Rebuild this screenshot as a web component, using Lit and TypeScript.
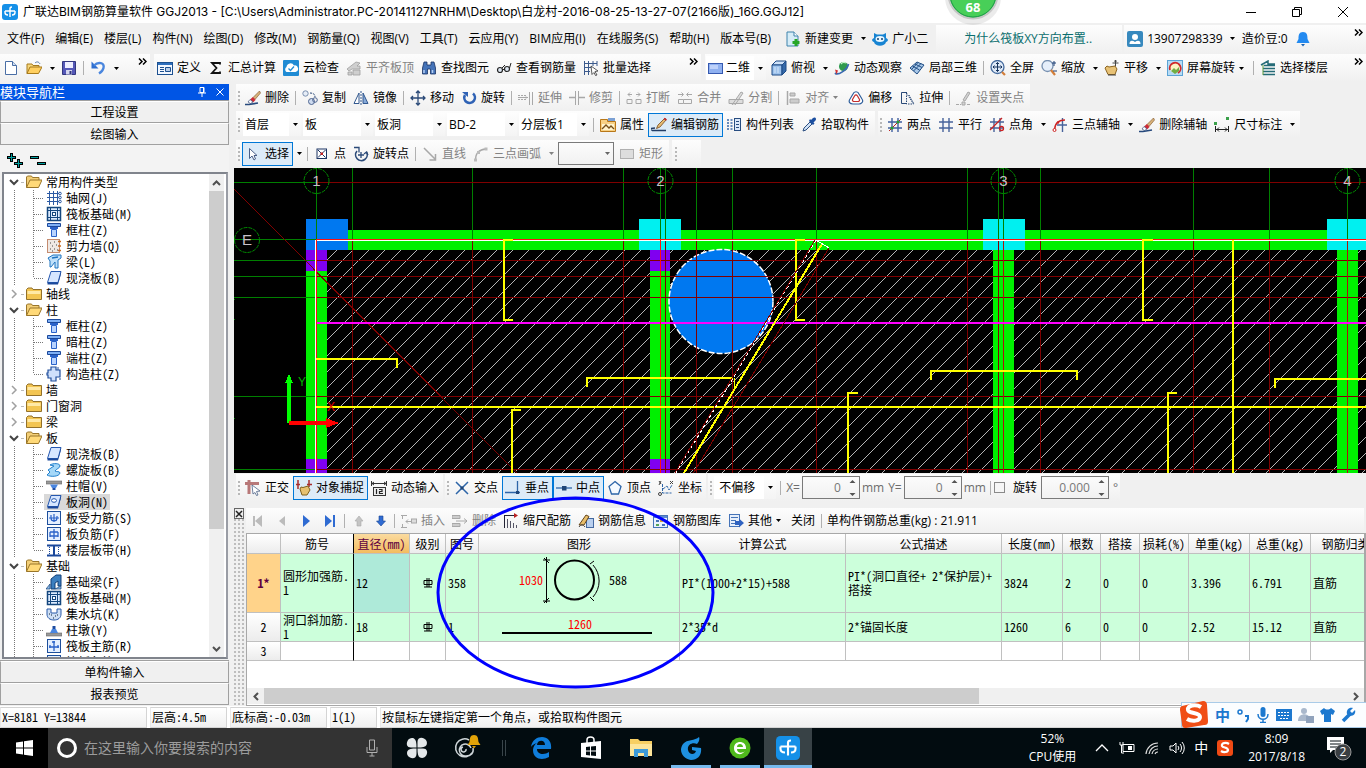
import { LitElement, html, svg, css, nothing, TemplateResult } from "lit";
import { customElement } from "lit/decorators.js";
import { classMap } from "lit/directives/class-map.js";

const GREY = "#a8a8a8";

const grid = (c: string) => svg`<path d="M5 1v14M11 1v14M1 5h14M1 11h14" stroke=${c} stroke-width="1.4" fill="none"/>`;
const frame = svg`<rect x="1.5" y="1.5" width="13" height="13" fill="#e4efff" stroke="#1d4f9c"/>`;
const column = svg`<path d="M1.500 1.500h13v3h-13z" fill="#7fb0f5" stroke="#1b489b"/><path d="M4 5h8v2H4z" fill="#2a62c9"/><path d="M5.500 7.500h5v7h-5z" fill="#b9d4ff" stroke="#2a62c9"/>`;
const slab = svg`<path d="M5 1.500h10l-3 11H1.500z" fill="#d6e6ff" stroke="#2558b0"/><path d="M1.500 12.500H12v2H1.500z" fill="#1b489b"/><path d="M12 12.500l3-11v2.500l-3 10.500z" fill="#1b489b"/>`;
const raft = svg`<rect x="1.500" y="1.500" width="13" height="13" fill="#dcebff" stroke="#14477e" stroke-width="1.500"/><path d="M4.500 2v12M11.500 2v12M2 4.500h12M2 11.500h12" stroke="#14477e"/><rect x="6.500" y="6.500" width="3" height="3" fill="#fff" stroke="#14477e"/>`;
const brush = svg`<path d="M14.500 1L8 7.500l2 2L15.500 3z" fill="#d8b27a" stroke="#7a4f22" stroke-width=".6"/><path d="M8 7L5 9.500 8 12.500l2.500-2.500z" fill="#cf2b37"/><path d="M5 9.500L3 12l2.500 1.500L8 12z" fill="#fff" stroke="#3c4c78" stroke-width=".7"/><path d="M0 14.500h4M4 14.500l9-1.500" stroke="#274a7d" stroke-width="1.600"/>`;

const ICONS: Record<string, TemplateResult> = {
  logo: svg`<rect width="16" height="16" rx="3" fill="#1590e8"/><path d="M8 13V4.500q0-1.500 2-1.500M3 7h10M3 7v1.500q0 2.500 3 2.500M13 7v1.500q0 2.500-3 2.500" stroke="#fff" stroke-width="1.400" fill="none"/>`,
  file: svg`<path d="M2.500 1.500h7l4 4v9h-11z" fill="#fff" stroke="#4a6ea5"/><path d="M9.500 1.500v4h4" fill="#cfdef2" stroke="#4a6ea5"/>`,
  open: svg`<path d="M1 13.500V4h5l1 1.500h6V7" fill="#f6d77c" stroke="#a77a1c"/><path d="M1 13.500L4 7h12l-3.500 6.500z" fill="#ffcf60" stroke="#a77a1c"/><path d="M9 3c2-2 4-1 5 1" stroke="#5577a8" fill="none"/>`,
  save: svg`<path d="M1.500 1.500h13v13h-13z" fill="#5558b8" stroke="#34387f"/><rect x="4" y="2" width="8" height="6" fill="#eef"/><rect x="5" y="10" width="6" height="4.500" fill="#d5d7ef"/><rect x="8.500" y="11" width="2" height="3" fill="#34387f"/>`,
  undo: svg`<path d="M1.500 1.500v7h7z" fill="#2f6fd0"/><path d="M4 5.500c4-4 11-3 9.500 2.500-.5 2-2 4-4.500 5.500" stroke="#4a86de" stroke-width="2.400" fill="none"/>`,
  define: svg`<rect x=".5" y="2.500" width="15" height="12" fill="#f2f7ff" stroke="#1c5090"/><rect x="1" y="3" width="14" height="2" fill="#2e6fbd"/><path d="M3 7.500h4M3 9.500h4M3 11.500h4" stroke="#1c5090"/><path d="M8.500 7.500h5v4h-5z" fill="#b9cde8" stroke="#1c5090"/>`,
  sigma: svg`<path d="M12 4.500V3H4l4.500 5L4 13h8v-1.500" fill="none" stroke="#111" stroke-width="1.800"/>`,
  cloud: svg`<rect width="16" height="16" rx="1" fill="#1f8bd4"/><path d="M3.500 12a3 3 0 0 1 0-5 4 4 0 0 1 7.500-1.500A3.300 3.300 0 0 1 12.500 12z" fill="#fff"/><path d="M5.500 8.500l2 2 3.500-4" stroke="#1f8bd4" stroke-width="1.300" fill="none"/>`,
  flat: svg`<path d="M1 9l9-7 4 1-3 3h3v3H6l-3 2zM2 12h4v3H2zM7 10h7v5H7z" fill="#cfcfcf" stroke="#a0a0a0" stroke-width=".8"/>`,
  find: svg`<path d="M3 2h3v3h4V2h3l1.500 6v6h-5V9h-3v5h-5V8z" fill="#4573b8" stroke="#1b3465" stroke-width=".8"/><path d="M3 10v3M11.500 10v3" stroke="#b6d0f3" stroke-width="1.500"/>`,
  view: svg`<circle cx="4" cy="10" r="2.500" fill="#dfe8f4" stroke="#222" stroke-width="1.200"/><circle cx="11" cy="9" r="2.500" fill="#dfe8f4" stroke="#222" stroke-width="1.200"/><path d="M6.500 10L8.500 9M13.500 8l1.500-5M6 8l3-3" stroke="#222"/>`,
  batch: svg`<path d="M1.500 1v14M1 3.500h13M1 7.500h8M1 11.500h6M5.500 1v14M10 1v5M14 1v5" stroke="#3c5a8c" fill="none"/><path d="M8 6l7 5-3 .5 2 3.500-1.500.5-1.500-3-2 2z" fill="#fff" stroke="#333" stroke-width=".8"/>`,
  rect2d: svg`<rect x=".5" y="3.500" width="14" height="10" fill="#8fb0f0" stroke="#3559b0"/><rect x="2" y="5" width="8" height="4" fill="#bdd1fa"/>`,
  cube: svg`<path d="M1 5l4-4h10l-4 4z" fill="#cfe2f8" stroke="#1d4a86"/><path d="M1 5h10v10H1z" fill="#9dc2ec" stroke="#1d4a86"/><path d="M11 5l4-4v10l-4 4z" fill="#3569a9" stroke="#1d4a86"/><path d="M4 7v6M7 7v6" stroke="#d4e6fa"/>`,
  orbit: svg`<circle cx="9.500" cy="6.500" r="4.500" fill="#2f9a4d"/><path d="M7 4a4 4 0 0 1 5-1" stroke="#c5f2c9" fill="none" stroke-width="1.300"/><path d="M1 13c3 3 12-3 13.500-9" stroke="#3a6ab0" stroke-width="1.800" fill="none"/><path d="M1 9.500l3 1-1.500 4z" fill="#d12f2f"/>`,
  local3d: svg`<path d="M1 8l7-6 7 3-7 9z" fill="#a9c8e9" stroke="#1f4d84"/><path d="M3.500 6l7 4M6 4l7 3.500M4.500 11L12 3.500M2.500 9.500L9 2.500" stroke="#1f4d84"/>`,
  full: svg`<circle cx="7.500" cy="7" r="6.500" fill="#dfeaf8" stroke="#466b9e" stroke-width="1.300"/><path d="M7.500 2.500v9M3 7h9M6 4l1.500-1.500L9 4M6 10l1.500 1.500L9 10M4.500 5.500L3 7l1.500 1.500M10.500 5.500L12 7l-1.500 1.500" stroke="#18355e" fill="none"/><path d="M12 12l3 3" stroke="#d27e3a" stroke-width="2.200"/>`,
  zoom: svg`<circle cx="6.500" cy="6" r="5.500" fill="#e6effa" stroke="#7790b0" stroke-width="1.300"/><path d="M10 10l4 5" stroke="#d27e3a" stroke-width="2.200"/><path d="M13 1v5M11 3h4M12 11h4" stroke="#1d3f74"/>`,
  pan: svg`<path d="M1 8l2-2 2 1 6-1 2 3-2 5.500H4z" fill="#e8c276" stroke="#8b6420"/><path d="M11.500 0v6M8.500 3h6M10.500 1.500l1-1.500 1 1.500M4 15h8" stroke="#444" fill="none"/>`,
  rotscreen: svg`<rect x=".5" y=".5" width="15" height="15" fill="#b7dcf5" stroke="#5ba3d5"/><circle cx="8" cy="8" r="5" fill="#fcf4c4"/><path d="M3 10a5.500 5.500 0 1 1 8 3" stroke="#cf2a2a" stroke-width="1.800" fill="none"/><path d="M4 11l3-3 2 2 3-3v4l-4 3z" fill="#70ae45"/>`,
  floors: svg`<path d="M1 5l7-4v3h7M4 5.500h11M3 8.500h12M3 11.500h12M3 14.500h12" stroke="#256b77" stroke-width="1.500" fill="none"/><path d="M3 5v10" stroke="#5f9c3e"/>`,
  newdoc: svg`<path d="M2 1h7l4 4v10H2z" fill="#d6ecf7" stroke="#3e83ac"/><path d="M9 1v4h4" fill="#fff" stroke="#3e83ac"/><path d="M11 8v7M7.500 11.500h7" stroke="#26a626" stroke-width="3"/>`,
  robot: svg`<path d="M2 2l3 1.500h6L14 2v5c3 1 2 4 0 4-1 5-11 5-12 0-2 0-3-3 0-4z" fill="#1784d2"/><ellipse cx="8" cy="8" rx="4.500" ry="3" fill="#e7f6ff"/><circle cx="6" cy="8" r="1" fill="#14416e"/><circle cx="10" cy="8" r="1" fill="#14416e"/>`,
  user: svg`<rect width="16" height="16" rx="2" fill="#3789be"/><circle cx="8" cy="6" r="3" fill="#fff"/><path d="M2.500 13c0-4 3-4 5.500-2 2.500-2 5.500-2 5.500 2z" fill="#fff"/>`,
  bell: svg`<path d="M8 1c4 0 4.500 3 4.500 7l2 4h-13l2-4C3.500 4 4 1 8 1z" fill="#238af0"/><path d="M6 13h4l-2 2.500z" fill="#1a63b4"/>`,
  brush,
  copy: svg`<circle cx="3.500" cy="3.500" r="2.700" fill="#e6edf7" stroke="#7a8fae"/><circle cx="9.500" cy="11.500" r="3" fill="#cfdcf0" stroke="#4e6590"/><circle cx="13" cy="10" r="2.300" fill="none" stroke="#4e6590"/><path d="M8 3c3 0 5 1 5 4" stroke="#2b4a78" fill="none" stroke-dasharray="2 1"/>`,
  mirror: svg`<path d="M1 13.500L6 3v10.500z" fill="#fff" stroke="#33598f"/><path d="M8 1v14" stroke="#33598f" stroke-dasharray="2 1"/><path d="M10 3l5 10.500h-5z" fill="#86a9d8" stroke="#33598f"/>`,
  move: svg`<path d="M8 1v14M1 8h14M6 3l2-2 2 2M6 13l2 2 2-2M3 6L1 8l2 2M13 6l2 2-2 2" stroke="#2b4a78" stroke-width="1.300" fill="none"/>`,
  rotate: svg`<path d="M12 3.500A5.300 5.300 0 1 1 4 5" stroke="#2f62b5" stroke-width="2.600" fill="none"/><path d="M1 2h6v5z" fill="#2f62b5"/>`,
  extend: svg`<path d="M0 5.500h8v4H0" stroke=${GREY} stroke-dasharray="2 1" fill="none"/><path d="M0 7.500h10M11.500 2v13M14.500 2v13" stroke=${GREY}/>`,
  trim: svg`<path d="M0 7.500h6M10 7.500h6" stroke=${GREY} stroke-width="1.500"/><path d="M6.500 1v14M9.500 1v14" stroke=${GREY}/>`,
  brk: svg`<path d="M1 9.500h5v4H1zM10 9.500h5v4h-5zM6 4.500H2M10 4.500h4M4 2.500l-2 2 2 2M12 2.500l2 2-2 2" stroke=${GREY} fill="none"/>`,
  join: svg`<path d="M1.500 9.500h5v4h-5zM6.500 9.500h8v4h-8M1 4.500h5M15 4.500h-5M4.500 2.500l2 2-2 2M11.500 2.500l-2 2 2 2" stroke=${GREY} fill="none"/>`,
  split: svg`<path d="M1 9.500h14v4H1zM4 15l9-13 2 1-8 12" stroke=${GREY} fill="#ddd"/>`,
  align: svg`<path d="M2.500 1v14" stroke=${GREY} stroke-width="1.500"/><path d="M5 3h5v3H5zM5 9h9v4H5z" fill="#ccc" stroke=${GREY}/>`,
  offset: svg`<path d="M5 4c1-3 5-3 6 0l3 5c2 3-1 5-3 5H5c-3 0-5-2-3-5z" fill="#fff" stroke="#2f5f9c" stroke-width="1.200"/><path d="M6.500 6c1-1.500 2-1.500 3 0l2 3.500c.5 1-.5 2-1.500 2H6c-1 0-2-1-1.500-2z" fill="#fff" stroke="#c22f2f" stroke-width="1.200"/>`,
  stretch: svg`<path d="M8 2.500H2.500v11H8" stroke="#2b4a78" fill="none"/><path d="M7.500 3v11h7zM10 5l5 9" stroke="#2b4a78" stroke-dasharray="1.500 1" fill="none"/>`,
  grip: svg`<path d="M0 14.500h5M11 14.500h4" stroke=${GREY} stroke-dasharray="3 1"/><path d="M7 10l5-8 2 1-5 8zM6 12h3v3H6z" fill="#d2d2d2" stroke=${GREY}/>`,
  prop: svg`<path d="M.5 2.500h7v2h8v10H.5z" fill="#f7d084" stroke="#b87718"/><path d="M2 7h12v6H2z" fill="#fff3cd"/><path d="M2 12l4-4 3 3 2-2 3 3" stroke="#754d16" fill="none" stroke-width="1.300"/><rect x="8" y="1" width="7" height="3" fill="#7ba0d4"/>`,
  editbar: svg`<path d="M14 1L7 8l-1.500 3.500L9 10l6-7z" fill="#e6bb72" stroke="#754b21" stroke-width=".8"/><path d="M13 1.500L15.500 3" stroke="#c4282e" stroke-width="1.500"/><path d="M0 14V11.500L4 11M1 13.500h14" stroke="#223d66" stroke-width="1.300" fill="none"/>`,
  list: svg`<path d="M1 3h2M1 6h2M1 9h2M1 12h2M4.500 3h2M4.500 6h2M4.500 9h2M4.500 12h2" stroke="#3a68a8" stroke-width="1.500"/><rect x="8.500" y="1.500" width="6" height="12" fill="#dbe8f9" stroke="#284d80"/><path d="M10 4.500h3M10 7.500h3M10 10.500h3" stroke="#284d80"/>`,
  picker: svg`<path d="M2 14l1-3 6-6 2 2-6 6z" fill="#cfe1f6" stroke="#2c4e80"/><path d="M8 4l4 4 1.500-1.500-1-1 2-2c1.500-2-.5-4-2.500-2.500l-2 2-1-1z" fill="#1c4fa0"/>`,
  ax2: svg`${grid("#4060a0")}<path d="M2 14L14 2" stroke="#b22" /><circle cx="5" cy="11" r="1.500" fill="#2b9b2b"/><circle cx="11" cy="5" r="1.500" fill="#2b9b2b"/>`,
  axpar: grid("#47639b"),
  axang: svg`${grid("#47639b")}<path d="M1 13L13 1" stroke="#c22" stroke-width="1.300"/><circle cx="12.500" cy="11.500" r="2" fill="none" stroke="#c22" stroke-width="1.300"/>`,
  ax3: svg`<path d="M10.500 1v14M5 8h10" stroke="#47639b" stroke-width="1.400"/><path d="M2.500 14C2.500 7 6 3 13 3" stroke="#c22" fill="none" stroke-width="1.300"/><circle cx="2.500" cy="13" r="1.500" fill="#fff" stroke="#c22"/><circle cx="6" cy="5.500" r="1.300" fill="#c22"/>`,
  dim: svg`<path d="M1.500 9v6M14.500 9v6M2 12.500h12M5 10.500l-2 2 2 2M11 10.500l2 2-2 2" stroke="#222" fill="none"/><rect x="0" y="5" width="3" height="3" fill="#3aa04a"/><rect x="12" y="0" width="3" height="3" fill="#3aa04a"/>`,
  cursor: svg`<path d="M4.500 2.500v10l2.500-2.500 2 4 1.500-1L9 9.500h3z" fill="#fff" stroke="#4a5f88"/>`,
  point: svg`<rect x="3" y="3" width="9.500" height="9.500" fill="#fff" stroke="#1c3564"/><path d="M4 4l7.500 7.500M11.500 4L4 11.500" stroke="#1c3564"/><rect x="6.500" y="6.500" width="2.500" height="2.500" fill="#c02020"/>`,
  rotpt: svg`<path d="M4 5a5.800 5.800 0 1 0 9.500 1" stroke="#2b4a78" stroke-width="1.600" fill="none"/><path d="M1 1.500h5v5M8 6v6M5 9h6M15 9l-1.500-3L11 8" stroke="#2b4a78" stroke-width="1.300" fill="none"/>`,
  line: svg`<path d="M2 2l11 11M13.500 8v6h-6" stroke=${GREY} stroke-width="1.500" fill="none"/>`,
  arc: svg`<path d="M2.500 14C2.500 8 5 3.500 13 3" stroke=${GREY} fill="none" stroke-width="1.300"/><path d="M1 12.500h3v3H1zM4 5h3v3H4zM11.500 1.500h3v3h-3z" fill="#bbb"/>`,
  rect: svg`<rect x="1.500" y="3.500" width="13" height="9" fill="#ddd" stroke="#b0b0b0"/>`,
  ortho: svg`<path d="M0 3.500h14M4 0v14" stroke="#b87878" stroke-width="3"/><path d="M7 5l8 6-3.500.5L13 15l-1.500.5-1.500-3L8 14z" fill="#fff" stroke="#4d6287" stroke-width=".8"/>`,
  snap: svg`<path d="M2 0v9M13 0v7M0 4.500h4M11 4.500h5" stroke="#a82d2d" stroke-width="1.500"/><path d="M4 9l1-2 2 .5L12 6l2 4-3 5H6z" fill="#e6c170" stroke="#80601c"/>`,
  dyn: svg`<path d="M.5 1v5M15.500 1v5M1 3.500h14M3 2L1 3.500 3 5M13 2l2 1.500L13 5" stroke="#333" fill="none"/><rect x="2.500" y="7.500" width="12" height="8" fill="#ececec" stroke="#333"/><path d="M5.500 9v5M8 9.500h3v2H8.500v2H12" stroke="#222" stroke-width="1.200" fill="none"/>`,
  cross: svg`<path d="M2 2l12 12M14 2L2 14" stroke="#2d65a8" stroke-width="1.500"/><rect x="6.500" y="6.500" width="3" height="3" fill="#1f4577"/>`,
  perp: svg`<path d="M0 12.500h15M12.500 1v13" stroke="#2d65a8" stroke-width="1.300"/><rect x="11" y="11" width="3" height="3" fill="#1f4577"/>`,
  mid: svg`<path d="M0 8h16" stroke="#2d65a8" stroke-width="1.300"/><rect x="6" y="6" width="4.500" height="4.500" fill="#1f4577"/>`,
  vertex: svg`<path d="M8 1.500l6 5-2.500 7.500h-7L2 6.500z" fill="#f5faff" stroke="#2d65a8" stroke-width="1.300"/>`,
  coord: svg`<path d="M4.500 4v9h9M5 9l4-3 2 4 3-5" stroke="#2d65a8" fill="none" stroke-dasharray="3 1"/><circle cx="2" cy="14" r="1.500" fill="none" stroke="#444"/><path d="M1 1l2 3M3 1L1 5M12 1l3 3M15 1l-3 3" stroke="#444"/>`,
  first: svg`<path d="M4 3v10" stroke="#bbb" stroke-width="2"/><path d="M12 2v12L5 8z" fill="#bbb"/>`,
  prev: svg`<path d="M11 3v10L5 8z" fill="#bbb"/>`,
  next: svg`<path d="M5 2v12l7-6z" fill="#2f6bd2"/>`,
  last: svg`<path d="M3 2v12l7-6z" fill="#2f6bd2"/><path d="M12 2v12" stroke="#2f6bd2" stroke-width="2"/>`,
  up: svg`<path d="M8 3l4 5H10v5H6V8H4z" fill="#c4c4c4" stroke="#aaa" stroke-width=".6"/>`,
  down: svg`<path d="M8 13l4.500-5H10V3H6v5H3.500z" fill="#2f6bd2" stroke="#1a4490" stroke-width=".6"/>`,
  insert: svg`<path d="M0 2.500h6M0 14.500h6M5 8.500h5M7 6.500l-2 2 2 2M1.500 3v3M1.500 11v3" stroke=${GREY} fill="none"/><rect x="10.500" y="6" width="5" height="4" fill="#ddd" stroke=${GREY}/>`,
  remove: svg`<path d="M0 2.500h8v3H0zM0 10.500h8v3H0z" fill="#ccc" stroke=${GREY}/><path d="M4 8h11M12 5.500L15 8l-3 2.500" stroke=${GREY} fill="none"/>`,
  scale: svg`<path d="M1.500 3v12" stroke="#223" /><path d="M4.500 6v9M7.500 8v7M10.500 10v5M13.500 12v3" stroke="#556"/><path d="M1 2.500h11" stroke="#223"/><path d="M11 0l4 2.500L11 5z" fill="#b22"/>`,
  info: svg`<rect x="8.500" y="5.500" width="7" height="9" fill="#b9cfee" stroke="#4469a0"/><path d="M1 12L8 2l3 1.500-5 8.500z" fill="#e8be6a" stroke="#64451b"/><path d="M1 14c2-3 4-3 6 0" stroke="#444" fill="none"/>`,
  lib: svg`<rect x=".5" y="2.500" width="14" height="12" fill="#eaf2fd" stroke="#4674b8"/><rect x="1" y="3" width="13" height="2" fill="#5b8ad0"/><rect x="3" y="7" width="3" height="2" fill="#4674b8"/><rect x="7" y="7" width="3" height="2" fill="#d8a23a"/><rect x="3" y="11" width="3" height="2" fill="#56a558"/><rect x="9" y="11" width="3" height="2" fill="#4674b8"/>`,
  other: svg`<rect x="1.500" y="1.500" width="10" height="12" fill="#e8f0fb" stroke="#4674b8"/><path d="M3 4.500h7M3 7.500h5M3 10.500h4" stroke="#4674b8"/><path d="M7 8h4V5.500L16 10l-5 4.500V12H7z" fill="#2f62c0"/>`,
  tgrid: svg`<path d="M3.500 1v14M7.500 1v14M11.500 1v14M1 3.500h12M1 7.500h12M1 11.500h12" stroke="#2d5ba5" fill="none"/><circle cx="14" cy="3.500" r="1.300" fill="none" stroke="#2d5ba5"/><circle cx="14" cy="7.500" r="1.300" fill="none" stroke="#2d5ba5"/><circle cx="14" cy="11.500" r="1.300" fill="none" stroke="#2d5ba5"/>`,
  traft: raft,
  tcol: column,
  twall: svg`<rect x="1.500" y="1.500" width="12" height="13" fill="#efe9e4" stroke="#c58c70"/><path d="M4 5h1M8 4h1M6 8h1M10 7h1M4 11h1M8 11h1M11 12h1M6 13h1" stroke="#444"/><path d="M12 3.500h3M12 8h3M12 12.500h3" stroke="#c96a1c" stroke-width="1.400"/>`,
  tbeam: svg`<path d="M2 4l5-3h8v3l-3 2v8H9V8L5 13H4V7z" fill="#bfe0fa" stroke="#1f74c0"/><path d="M6 4l6-1" stroke="#1f74c0" stroke-width="1.500"/>`,
  tslab: slab,
  tcross: svg`<path d="M5 1h5v3h4v7h-4v4H5v-3H2V9H1V7h1V4h3z" fill="#cfe0fb" stroke="#204e9c" stroke-width="1.200"/><path d="M12 1v3M14 12v2" stroke="#204e9c"/>`,
  tspiral: svg`<path d="M4 3c3-2 10-2 10 1 0 2-4 3-5 5 1 1 5 0 5 2-1 4-10 4-13 2l3-3-2-2 6-4z" fill="#a5d8f8" stroke="#2380cc"/>`,
  tcap: svg`<rect x="0" y="3" width="16" height="3" fill="#999" stroke="#666" stroke-width=".6"/><path d="M4 6.500h8L10 10H6z" fill="#4a86e0"/><path d="M6.500 10h3v2h-3z" fill="#1e4ca0"/>`,
  thole: svg`${slab}<ellipse cx="8" cy="6.500" rx="2.500" ry="1.800" fill="#fff" stroke="#2558b0"/>`,
  tbar1: svg`${frame}<path d="M3 8h10M8 4v8M5 5v3a3 3 0 0 0 6 0V6" stroke="#2a62c9" fill="none" stroke-width="1.200"/>`,
  tbar2: svg`${frame}<path d="M8 3v10M4 6h8M4 10h8M4 6v5M12 6v5" stroke="#2a62c9" fill="none" stroke-width="1.300"/>`,
  tband: svg`<path d="M1 13.500h14M8 3v10M1 3.500h14" stroke="#1b489b" stroke-width="2" fill="none"/><path d="M3.500 5v8M12.500 5v8" stroke="#1b489b" stroke-dasharray="1 1"/>`,
  tfbeam: svg`<path d="M5 5l5-4h5v11h-3V7L9 9v6H5z" fill="#3c7fc0" stroke="#123f77"/><path d="M0 15l4-5v5zM9 15l6-3v3z" fill="#8ab9e6" stroke="#123f77" stroke-width=".7"/>`,
  tpit: svg`<path d="M1 3h4v4h6V3h4v5c0 4-3 6-7 6S1 12 1 8z" fill="#cfe0f5" stroke="#2a5aa8"/><path d="M5 9h1M9 10h1M7 12h1M11 9h1M3 8h1" stroke="#123"/>`,
  tpier: svg`<rect x="0" y="11" width="16" height="3" fill="#999" stroke="#666" stroke-width=".6"/><path d="M4 11l2-4h4l2 4z" fill="#4a86e0"/><path d="M6.500 4h3v3h-3z" fill="#1e4ca0"/>`,
  tmain: svg`${frame}<path d="M8 3v10M3 9h10M4 7v3M12 7v3M6 4h3" stroke="#2a62c9" fill="none" stroke-width="1.300"/>`,
  fopen: svg`<path d="M.5 13.500V3l1-1h4l1 1.500H13V6" fill="#f3cf78" stroke="#9a762a"/><path d="M.5 13.500L4 6h12l-3.500 7.500z" fill="#ffd978" stroke="#9a762a"/>`,
  fclosed: svg`<path d="M.5 13.500v-10L2 2h4l1 1.500h8.500v10z" fill="#f3c552" stroke="#93712a"/><path d="M1.500 5h13v3h-13z" fill="#ffe9a6"/>`,
};

const icon = (name: string) => html`<svg class="ic" width="16" height="16" viewBox="0 0 16 16" aria-hidden="true">${ICONS[name]}</svg>`;

const tri = html`<svg width="5" height="3" viewBox="0 0 5 3" aria-hidden="true"><path d="M0 0h5L2.500 3z" fill="currentColor"/></svg>`;

const chevrons = html`<svg class="more" width="9" height="7" viewBox="0 0 9 7" aria-hidden="true"><path d="M1 .5l3 3-3 3M5 .5l3 3-3 3" fill="none" stroke="#000" stroke-width="1.500"/></svg>`;

interface Opt { off?: boolean; on?: boolean; split?: boolean; drop?: boolean; }

const tool = (ic: string, text: string, o: Opt = {}) => html`<button class=${classMap({ tool: true, off: !!o.off, on: !!o.on })} ?disabled=${o.off} aria-label=${text.replace("~", "")}>
    ${ic ? icon(ic) : nothing}${text && !text.startsWith("~") ? html`<span>${text}</span>` : nothing}${o.drop ? html`<i class="tight">${tri}</i>` : nothing}</button>${o.split ? html`<button class=${classMap({ arrow: true, off: !!o.off })} aria-label="展开">${tri}</button>` : nothing}`;

const sep = html`<i class="sep"></i>`;
const grip = html`<i class="grip"></i>`;

const combo = (label: string, value: string, cls = "") => html`<span class="combo ${cls}"><select aria-label=${label}><option>${value}</option></select><i>${tri}</i></span>`;

const spin = (label: string, value: string, cls = "") => html`<span class="spin ${cls}"><input type="text" aria-label=${label} .value=${value} disabled /><svg width="7" height="18" viewBox="0 0 7 18" aria-hidden="true"><path d="M.5 4L3.500 1l3 3zM.5 14l3 3 3-3z" fill="#555"/></svg></span>`;

type Node = [level: 0 | 1, icon: string, text: string, flag?: string];
const TREE: Node[] = [
  [0, "fopen", "常用构件类型"],
  [1, "tgrid", "轴网(J)"], [1, "traft", "筏板基础(M)"], [1, "tcol", "框柱(Z)"], [1, "twall", "剪力墙(Q)"], [1, "tbeam", "梁(L)"], [1, "tslab", "现浇板(B)", "last"],
  [0, "fclosed", "轴线"],
  [0, "fopen", "柱"],
  [1, "tcol", "框柱(Z)"], [1, "tcol", "暗柱(Z)"], [1, "tcol", "端柱(Z)"], [1, "tcross", "构造柱(Z)", "last"],
  [0, "fclosed", "墙"], [0, "fclosed", "门窗洞"], [0, "fclosed", "梁"],
  [0, "fopen", "板"],
  [1, "tslab", "现浇板(B)"], [1, "tspiral", "螺旋板(B)"], [1, "tcap", "柱帽(V)"], [1, "thole", "板洞(N)", "sel"], [1, "tbar1", "板受力筋(S)"], [1, "tbar2", "板负筋(F)"], [1, "tband", "楼层板带(H)", "last"],
  [0, "fopen", "基础"],
  [1, "tfbeam", "基础梁(F)"], [1, "traft", "筏板基础(M)"], [1, "tpit", "集水坑(K)"], [1, "tpier", "柱墩(Y)"], [1, "tmain", "筏板主筋(R)"], [1, "tbar2", "筏板负筋(X)"],
];

const MENUS = ["文件(F)", "编辑(E)", "楼层(L)", "构件(N)", "绘图(D)", "修改(M)", "钢筋量(Q)", "视图(V)", "工具(T)", "云应用(Y)", "BIM应用(I)", "在线服务(S)", "帮助(H)", "版本号(B)"];

@customElement("cad-view")
class CadView extends LitElement {
  static styles = css`
    :host { display: block; background: #000; overflow: hidden; }
    svg { display: block; width: 100%; height: 100%; }
    text { font-family: "Liberation Sans", Arial, sans-serif; font-size: 15px; text-anchor: middle; }
    .ucs { font-size: 12px; }
  `;

  render() {
    const xs = [352, 472, 623, 665, 696, 732, 816, 967, 998, 1040, 1193, 1269];
    const axes = [316, 660, 1003, 1347];
    const ys = [260, 276, 297, 396, 469];
    const hatch = Array.from({ length: 88 }, (_, i) => {
      const s = 571 + i * 16;
      return `M${s - 250} 250L${s - 474} 474`;
    }).join("");
    const bars = "M513 240h-9v80h9M316 359h81v9M316 407H1600M521 410h-9v80M587 387v-9h146M805 240h-9v80h9M858 393h-10v100M931 380v-9h146v9M1153 240h-10v80h10M1233 240v250M1177 393h-9v100M1275 388v-9h320";
    return html`<svg role="img" aria-label="绘图区">
      <defs><clipPath id="slab"><path d="M327 250h2000v800H327z"/></clipPath></defs>
      <g transform="translate(-234 -168)">
        <path d=${hatch} stroke="#b4b4b4" fill="none" clip-path="url(#slab)" shape-rendering="crispEdges"/>
        <g shape-rendering="crispEdges">
          <path d="M348 230h2000v20H348zM306 271h21v188h-21zM650 271h20v188h-20zM993 250h21v400h-21zM1337 250h21v400h-21z" fill="#00f000"/>
          <path d="M306 250h21v21h-21zM306 459h21v40h-21zM650 250h20v21h-20zM650 459h20v40h-20z" fill="#8000f0"/>
          <path d="M639 219h42v31h-42zM983 219h42v31h-42zM1327 219h42v31h-42z" fill="#00f0f0"/>
          <path d="M306 219h42v31h-42z" fill="#0078f0"/>
        </g>
        <circle cx="721" cy="301.500" r="52" fill="#0078f0" stroke="#fff" stroke-width="1.500" stroke-dasharray="6 2"/>
        <g shape-rendering="crispEdges" fill="none">
          <path d=${[...xs, ...axes].map((x) => `M${x}.5 168v72`).join("")} stroke="#007f00"/>
          <path d=${[182, 239, ...ys].map((y) => `M234 ${y}.5h82`).join("")} stroke="#007f00"/>
          <path d=${xs.map((x) => `M${x}.5 240v400`).join("")} stroke="#7f0000"/>
          <path d=${[182, ...ys].map((y) => `M316 ${y}.5h1300`).join("")} stroke="#7f0000"/>
          <path d="M234 189L534 490" stroke="#7f0000"/>
          <path d="M1003.500 240v300M1347.500 240v300" stroke="#b01010"/>
          <path d="M316 323h1300" stroke="#f0f" stroke-width="2"/>
          <path d="M316 240.500h1300M315.500 240v250" stroke="#fff"/>
          <path d="M316 239.500h1300M316.500 240v250M660.500 240v250" stroke="#ff1010"/>
          <path d=${bars} stroke="#ff0" stroke-width="2"/>
          <path d="M734.500 378v13" stroke="#ff0"/>
          <path d="M822 244L678 483" stroke="#ff0" stroke-width="2"/>
          <path d="M816 240L673 478" stroke="#fff" stroke-dasharray="3 3"/>
          <path d="M815 240L673 476M829 248L688 482" stroke="#7f0000"/>
          <path d="M816 240l13 8" stroke="#fff"/>
        </g>
        <path d="M234 299.500h1M234 319.500h1M234 418.500h1" stroke="#007f00"/>
        <g fill="none" stroke="#008a00" stroke-dasharray="4 1">
          ${axes.map((x) => svg`<circle cx=${x + 0.5} cy="181" r="12.500"/>`)}
          <circle cx="247" cy="240" r="12.500"/>
        </g>
        <g fill="#c8c0c8">
          ${axes.map((x, i) => svg`<text x=${x + 0.5} y="186">${i + 1}</text>`)}
          <text x="247" y="245">E</text>
        </g>
        <g shape-rendering="crispEdges">
          <path d="M287 423v-40h-2l4-9 4 9h-2v40z" fill="#0f0"/>
          <path d="M289 421h37v-3l13 5-13 5v-3h-37z" fill="#f00"/>
        </g>
        <text class="ucs" x="302" y="386" fill="#00b400">Y</text>
        <text class="ucs" x="331" y="411" fill="#e00000">X</text>
      </g>
    </svg>`;
  }
}

const shared = css`
  :host { font-family: "Open Sans", "Noto Sans CJK SC", sans-serif; font-size: 12px; line-height: 16px; color: #000; }
  * { box-sizing: border-box; }
  button, input, select { font: inherit; color: inherit; margin: 0; padding: 0; border: 0; background: none; border-radius: 0; white-space: nowrap; }
  svg { flex: none; display: block; }
  .song { font-family: "Noto Sans CJK SC", sans-serif; font-feature-settings: "hwid" 1; }
`;

@customElement("module-nav")
class ModuleNav extends LitElement {
  static styles = [shared, css`
    :host { display: flex; flex-direction: column; width: 229px; flex: none; background: #f0f0f0; }
    .head { display: flex; align-items: center; height: 16px; background: #0055e5; color: #fff; font-size: 13px; margin-bottom: 1px; }
    .head h2 { font: inherit; margin: 0; flex: 1; }
    .head button { width: 18px; height: 16px; display: grid; place-items: center; }
    .big { height: 22px; flex: none; border: 1px solid #a0a0a0; border-top-color: #fff; box-shadow: 0 -1px #a0a0a0; text-align: center; }
    .mini { display: flex; gap: 6px; padding: 8px 7px 0; height: 27px; flex: none; background: #f3f3f3; }
    .mini button { height: 15px; }
    .tree { flex: 1; min-height: 0; display: flex; background: #fff; border: 2px solid #80848c; border-right-color: #9a9da5; margin: 0 1px 0 2px; }
    ul { list-style: none; margin: 0; padding: 0; flex: 1; overflow: hidden; }
    li { display: flex; height: 16px; align-items: center; }
    li button { display: flex; align-items: center; height: 16px; padding: 0 2px; gap: 4px; }
    .sel { background: #d9d9d9; }
    .bar { width: 15px; margin-right: 2px; background: #f0f0f0; display: flex; flex-direction: column; }
    .bar i { height: 17px; display: grid; place-items: center; flex: none; }
    .bar b { flex: 0 0 70%; background: #cdcdcd; }
    .bar s { flex: 1; }
    .foot { padding-top: 2px; margin-bottom: 1px; display: flex; flex-direction: column; }
  `];

  private row([level, ic, text, flag]: Node) {
    const open = ic === "fopen";
    if (level === 0) {
      return html`<li><svg width="20" height="16" viewBox="0 0 20 16" aria-hidden="true">
          ${open ? svg`<path d="M6 6l4 4 4-4" stroke="#444" stroke-width="2" fill="none"/>` : svg`<path d="M8 4l4 4-4 4" stroke="#a0a0a0" stroke-width="1.500" fill="none"/>`}
          <path d="M17.500 8.500h3" stroke="#777" stroke-dasharray="1 1"/></svg><button>${icon(ic)}<span>${text}</span></button></li>`;
    }
    return html`<li><svg width="40" height="16" viewBox="0 0 40 16" aria-hidden="true">
        <path d="M10.500 0v16M29.500 0v${flag === "last" ? 8 : 16}M30 8.500h10" stroke="#777" stroke-dasharray="1 1" fill="none"/></svg><button class=${flag === "sel" ? "sel" : ""}>${icon(ic)}<span>${text}</span></button></li>`;
  }

  render() {
    return html`
      <div class="head song"><h2>模块导航栏</h2>
        <button aria-label="固定"><svg width="8" height="10" viewBox="0 0 8 10"><path d="M2 .5h4v5H2zM0 6h8M4 6v4M5.500 1v5" stroke="#fff" fill="none"/></svg></button>
        <button aria-label="关闭"><svg width="8" height="8" viewBox="0 0 8 8"><path d="M.5.5l7 7M7.500.5l-7 7" stroke="#fff"/></svg></button></div>
      <button class="big song">工程设置</button>
      <button class="big song">绘图输入</button>
      <div class="mini">
        <button aria-label="全部展开"><svg width="17" height="15" viewBox="0 0 17 15"><path d="M0 4.500h9M4.500 0v9M7 10.500h9M11.500 6v9" stroke="#000" stroke-width="3"/><path d="M1 4.500h7M4.500 1v7M8 10.500h7M11.500 7v7" stroke="#00a0a0"/></svg></button>
        <button aria-label="全部折叠"><svg width="17" height="15" viewBox="0 0 17 15"><path d="M0 4.500h9M7 10.500h9" stroke="#000" stroke-width="3"/><path d="M1 4.500h7M8 10.500h7" stroke="#00a0a0"/></svg></button>
      </div>
      <div class="tree song"><ul>${TREE.map((n) => this.row(n))}</ul>
        <div class="bar"><i><svg width="9" height="6" viewBox="0 0 9 6"><path d="M1 5l3.500-3.500L8 5" stroke="#505050" stroke-width="2" fill="none"/></svg></i><b></b><s></s><i><svg width="9" height="6" viewBox="0 0 9 6"><path d="M1 1l3.500 3.500L8 1" stroke="#505050" stroke-width="2" fill="none"/></svg></i></div>
      </div>
      <div class="foot"><button class="big song">单构件输入</button><button class="big song">报表预览</button></div>`;
  }
}

@customElement("bar-table")
class BarTable extends LitElement {
  static styles = [shared, css`
    :host { display: flex; flex-direction: column; overflow: hidden; background: #fff; border: 1px solid #a8a8a8; border-width: 1px 2px 1px 1px; }
    .scroll { flex: 1; overflow: hidden; min-height: 0; }
    table { border-collapse: separate; border-spacing: 0; table-layout: fixed; width: 1134px; line-height: 14px; }
    th, td { padding: 0 2px; border-right: 1px solid #c0c0c0; border-bottom: 1px solid #c0c0c0; text-align: left; font-weight: 400; overflow: hidden; white-space: nowrap; }
    thead th { height: 20px; background: linear-gradient(#fff, #ececec); text-align: center; padding: 0; line-height: 18px; }
    thead th.hot { background: linear-gradient(#fbdba0, #f2bc5f); color: #600040; }
    tbody th { text-align: center; background: linear-gradient(#fff, #ececec); }
    tbody td { background: #ccffdb; }
    tbody .blank td { background: #fff; }
    tr .cur { background: #aeead9; }
    tbody th.hot { background: #ffd38a; color: #600040; font-weight: 700; }
    .r1 { height: 59px; } .r2 { height: 29px; } .blank { height: 19px; }
    .wrap { white-space: normal; }
    .frozen { border-right-color: #000; }
    td svg { margin: 0 auto; }
    svg text { font-size: 12px; }
    .hbar { display: flex; height: 16px; flex: none; background: #f0f0f0; margin-bottom: 1px; }
    .hbar i { width: 17px; display: grid; place-items: center; }
    .hbar b { flex: 0 0 64%; background: #cdcdcd; }
    .hbar s { flex: 1; }
  `];

  render() {
    const widths = [34, 73, 56, 36, 33, 201, 166, 156, 61, 38, 39, 49, 61, 61, 70];
    const heads = ["", "筋号", "直径(mm)", "级别", "图号", "图形", "计算公式", "公式描述", "长度(mm)", "根数", "搭接", "损耗(%)", "单重(kg)", "总重(kg)", "钢筋归类"];
    const grade = html`<svg width="10" height="10" viewBox="0 0 10 10" role="img" aria-label="HRB400"><path d="M1 2.500h8v4H1zM4 0v9M6 0v9M1 9h8" stroke="#000" fill="none"/></svg>`;
    return html`<div class="scroll song"><table>
      <colgroup>${widths.map((w) => html`<col style="width:${w}px" />`)}</colgroup>
      <thead><tr>${heads.map((h, i) => html`<th scope="col" class=${i === 2 ? "hot" : i === 1 ? "frozen" : ""}>${h}</th>`)}</tr></thead>
      <tbody>
        <tr class="r1"><th scope="row" class="hot">1*</th><td class="wrap frozen">圆形加强筋.<br />1</td><td class="cur">12</td><td>${grade}</td><td>358</td>
          <td><svg width="120" height="56" viewBox="0 0 120 56">
            <text x="0" y="30" fill="#f00">1030</text>
            <path d="M27.500 2v46M24 5h7M24 46h7M25 3l5 5M25 48l5-5" stroke="#000" fill="none"/>
            <circle cx="55.500" cy="25" r="19.500" fill="none" stroke="#000" stroke-width="2"/>
            <path d="M74 10a24 24 0 0 1 0 32M71 9l4-3M71 42l4 4" stroke="#000" fill="none" />
            <text x="90" y="30">588</text></svg></td>
          <td>PI*(1000+2*15)+588</td><td class="wrap">PI*(洞口直径+ 2*保护层)+<br />搭接</td><td>3824</td><td>2</td><td>0</td><td>0</td><td>3.396</td><td>6.791</td><td>直筋</td></tr>
        <tr class="r2"><th scope="row">2</th><td class="wrap frozen">洞口斜加筋.<br />1</td><td>18</td><td>${grade}</td><td>1</td>
          <td><svg width="156" height="24" viewBox="0 0 156 24"><text x="67" y="14" fill="#f00">1260</text><path d="M1 18h150" stroke="#000" stroke-width="2"/></svg></td>
          <td>2*35*d</td><td>2*锚固长度</td><td>1260</td><td>6</td><td>0</td><td>0</td><td>2.52</td><td>15.12</td><td>直筋</td></tr>
        <tr class="blank"><th scope="row">3</th>${heads.slice(1).map((_, i) => html`<td class=${i === 0 ? "frozen" : ""}></td>`)}</tr>
      </tbody></table></div>
      <div class="hbar"><i><svg width="6" height="9" viewBox="0 0 6 9"><path d="M5 1L1.500 4.500 5 8" stroke="#505050" stroke-width="2" fill="none"/></svg></i><b></b><s></s><i><svg width="6" height="9" viewBox="0 0 6 9"><path d="M1 1l3.500 3.500L1 8" stroke="#505050" stroke-width="2" fill="none"/></svg></i></div>`;
  }
}

@customElement("task-bar")
class TaskBar extends LitElement {
  static styles = [shared, css`
    :host { display: flex; height: 40px; flex: none; background: #020c10; color: #fff; }
    button { display: grid; place-items: center; }
    .start { width: 48px; background: #000; }
    .search { width: 344px; background: #333; display: flex; align-items: center; gap: 6px; padding: 0 14px 0 8px; }
    .search input { flex: 1; min-width: 0; font-size: 14px; }
    .search input::placeholder { color: #9c9c9c; opacity: 1; }
    .app { width: 50px; }
    .app.run { box-shadow: inset 0 -3px #76b9ed; width: 40px; margin: 0 4px 0 5px; }
    .app.active { box-shadow: inset 0 -3px #76b9ed; background: #384246; width: 48px; }
    .space { flex: 1; }
    .div { border-left: 1px solid #39454a; border-right: 1px solid #39454a; margin: 12px 10px; width: 4px; }
    .two { display: flex; flex-direction: column; justify-content: center; text-align: center; line-height: 18px; }
    .tray { display: flex; align-items: center; gap: 9px; margin: 0 15px 0 18px; font-size: 14px; }
    .note { width: 46px; margin: 0 4px 0 11px; }
  `];

  render() {
    return html`
      <button class="start" aria-label="开始"><svg width="17" height="16" viewBox="0 0 17 16"><path d="M0 2.500l7-1v6H0zM8 1.300L17 0v7.500H8zM0 8.500h7v6l-7-1zM8 8.500h9V16l-9-1.300z" fill="#fff"/></svg></button>
      <div class="search"><svg width="22" height="22" viewBox="0 0 22 22"><circle cx="11" cy="11" r="8.500" fill="none" stroke="#fff" stroke-width="3"/></svg>
        <input type="text" aria-label="搜索" placeholder="在这里输入你要搜索的内容" />
        <svg width="12" height="18" viewBox="0 0 12 18"><path d="M3.500 1h5v10h-5zM1 8v5.500h10V8M6 14v3M3.500 17h5" stroke="#b0b0b0" fill="none"/></svg></div>
      <button class="app" aria-label="风车"><svg width="22" height="22" viewBox="0 0 22 22"><path d="M10.500 10.500H5C1 10.500 0 7 1.500 4S6 .5 8 1.500c2 1 2.500 4 2.500 9zM11.500 10.500V5c0-4 3.500-5 6.500-3.500s3.500 4.500 2.500 6.500c-1 2-4 2.500-9 2.500zM11.500 11.500H17c4 0 5 3.500 3.500 6.500s-4.500 3.500-6.500 2.500c-2-1-2.500-4-2.500-9zM10.500 11.500V17c0 4-3.500 5-6.500 3.500S.500 16 1.500 14c1-2 4-2.500 9-2.500z" fill="#e4e8ea"/></svg></button>
      <button class="app" aria-label="旋涡"><svg width="30" height="28" viewBox="0 0 30 28"><path d="M19 14a6 6 0 1 0-5 8c5 0 8-3 7-8M20 19a9 9 0 1 1-3-13M14 15a2.500 2.500 0 1 1-3-2" fill="none" stroke="#cfd6d9" stroke-width="1.500"/><path d="M22 1c4 0 4 3 4.500 7l2 3h-13l2-3C18 4 18 1 22 1z" fill="#e2a308"/><path d="M20 12h4l-2 2.500z" fill="#e2a308"/></svg></button>
      <i class="div"></i>
      <button class="app" aria-label="Edge"><svg width="22" height="22" viewBox="0 0 22 22"><path d="M1 10C2 3 7 0 12 0c6 0 10 5 9 12H7c0 6 8 6 12 3v5C12 24 3 22 3 13c0-3 2-6 4-7-3 1-5 2-6 4zm6-2h8c0-6-8-5-8 0z" fill="#0f7ddb"/></svg></button>
      <button class="app" aria-label="应用商店"><svg width="20" height="24" viewBox="0 0 20 24"><path d="M0 7l20-2v18L0 21z" fill="#fff"/><path d="M6 8V4c0-4 7-4 7 0v3" stroke="#fff" stroke-width="1.500" fill="none"/><path d="M5 11l4-.5v4H5zM10 10.400l5-.5v4.600h-5zM5 15.500h4v4l-4-.5zM10 15.500h5v4.600l-5-.5z" fill="#020c10"/></svg></button>
      <button class="app" aria-label="文件资源管理器"><svg width="22" height="20" viewBox="0 0 22 20"><path d="M0 1h8l2 2h12v15H0z" fill="#f7cf63"/><path d="M0 6h22v12H0z" fill="#fde59a"/><path d="M4 11h14v8h-4v-4H8v4H4z" fill="#3d9ad8"/></svg></button>
      <button class="app run" aria-label="浏览器"><svg width="24" height="24" viewBox="0 0 24 24"><path d="M20 1C16 5 8 3 4 8c-5 7 0 15 8 16 7 0 11-5 10-12l-9-1v3l4 1c-1 4-7 4-8-1-1-5 4-8 9-6 2-2 3-5 2-7z" fill="#1e90e0"/></svg></button>
      <button class="app run" aria-label="绿色浏览器"><svg width="22" height="22" viewBox="0 0 22 22"><circle cx="11" cy="11" r="10.500" fill="#4fb91c"/><path d="M5 11c0-8 12-8 12 0v1H8c0 5 6 4 8 2-3 5-11 4-11-3zm3-1h6c0-4-6-4-6 0z" fill="#fff"/></svg></button>
      <button class="app active" aria-label="广联达"><svg width="24" height="24" viewBox="0 0 16 16">${ICONS.logo}</svg></button>
      <span class="space"></span>
      <div class="two"><span>52%</span><span>CPU使用</span></div>
      <div class="tray">
        <svg width="16" height="16" viewBox="0 0 16 16"><path d="M2 11l6-6 6 6" stroke="#fff" fill="none" stroke-width="1.300"/></svg>
        <svg width="16" height="16" viewBox="0 0 16 16"><path d="M4 4.500h11v7H4zM1 2v3h3V2M2.500 5v8H5" stroke="#fff" fill="none"/><path d="M9 6h4v4H9z" fill="#fff"/></svg>
        <svg width="16" height="16" viewBox="0 0 16 16"><path d="M2 14A12 12 0 0 1 14 3M5 14a9 9 0 0 1 9-8M8 14a6 6 0 0 1 6-5M11 14a3 3 0 0 1 3-2" stroke="#ddd" fill="none" stroke-width="1.200"/></svg>
        <svg width="16" height="16" viewBox="0 0 16 16"><path d="M1 6h3l3-3v10l-3-3H1zM9 6a3 3 0 0 1 0 4M11 4a6 6 0 0 1 0 8M13 2a9 9 0 0 1 0 12" stroke="#fff" fill="none"/></svg>
        <span>中</span>
        <svg width="16" height="16" viewBox="0 0 16 16"><rect width="16" height="16" rx="3" fill="#f04a14"/><path d="M12 4c-3-2-8-1-7 2 1 2 6 1 6 4 0 2-4 3-7 1" stroke="#fff" stroke-width="2.200" fill="none"/></svg>
      </div>
      <div class="two"><span>8:09</span><span>2017/8/18</span></div>
      <button class="note" aria-label="通知 2"><svg width="26" height="28" viewBox="0 0 26 28"><path d="M1 3h17v13H7l-3 3v-3H1z" fill="#fff"/><path d="M4 7h11M4 10h11M4 13h7" stroke="#020c10"/><circle cx="17" cy="18" r="8" fill="#3a3f42" stroke="#999"/><text x="17" y="22" fill="#fff" font-size="12" text-anchor="middle">2</text></svg></button>`;
  }
}

@customElement("app-root")
class AppRoot extends LitElement {
  static styles = [shared, css`
    :host { display: flex; flex-direction: column; height: 100vh; position: relative; overflow: hidden; background: #f0f0f0; }
    .title { display: flex; align-items: center; height: 23px; flex: none; background: #fff; padding-left: 2px; }
    .title h1 { font-family: "Inter", "Noto Sans CJK SC", sans-serif; font-size: 12px; font-weight: 400; margin: 0; padding-left: 5px; flex: 1; white-space: nowrap; }
    .title button { width: 46px; height: 22px; display: grid; place-items: center; }
    .menu { display: flex; height: 31px; flex: none; align-items: center; }
    .menu nav { display: flex; gap: 1px; padding: 0 6px 0 2px; }
    .menu nav button { padding: 0 5px; }
    .spread { display: flex; height: 30px; flex: none; gap: 4px; }
    .group { display: flex; align-items: center; height: 27px; background: linear-gradient(#fdfdfd, #f0f0f0); position: relative; }
    .spread .group { height: 28px; }
    .lead { width: 150px; } .mid { width: 547px; } .rest { flex: 1; }
    .more { margin-left: auto; align-self: flex-start; margin-top: 4px; margin-right: 3px; }
    .news { height: 28px; padding: 0 28px; margin: 0 2px 0 4px; }
    .news a { color: #0a6e6e; text-decoration: none; width: 130px; white-space: nowrap; }
    .account { flex: 1; height: 28px; }
    .tool { display: flex; align-items: center; gap: 4px; height: 24px; flex: none; padding: 0 3px 0 2px; border: 1px solid transparent; }
    .tool .tight { width: 8px; margin-left: -4px; padding-left: 4px; box-sizing: content-box; }
    .off { color: #838383; }
    .on { background: #dcebf8; border-color: #0078d7; }
    .arrow { width: 12px; height: 22px; display: grid; place-items: center; }
    .sep { width: 1px; height: 14px; background: #b0b0b0; margin: 0 3px 0 2px; flex: none; }
    .grip { width: 6px; height: 16px; flex: none; background: radial-gradient(circle, #b8b8b8 1px, transparent 1px) 0 0 / 6px 4px; }
    .body { display: flex; flex: 1; min-height: 0; }
    main { flex: 1; min-width: 0; display: flex; flex-direction: column; margin-left: 5px; }
    .row { display: flex; gap: 3px; padding-left: 2px; flex: none; height: 27px; }
    .row.last { height: 30px; padding-top: 1px; align-items: center; }
    .row .group { padding-right: 2px; }
    .stub { width: 29px; }
    .stub .grip { margin-left: 1px; }
    .combo { display: flex; position: relative; width: 70px; height: 23px; background: #fff; margin-right: 2px; flex: none; }
    .combo select { appearance: none; width: 100%; padding-left: 2px; }
    .combo i { position: absolute; right: 0; top: 0; bottom: 0; width: 12px; display: grid; place-items: center; background: linear-gradient(#fdfdfd, #f4f4f4); pointer-events: none; }
    .combo.first { width: 58px; margin-left: 1px; }
    .combo.box { width: 56px; border: 1px solid #7a7a7a; margin-left: 1px; background: none; }
    .combo.box i { color: #666; background: none; }
    .combo.shift { width: 62px; }
    .combo.shift select { padding-left: 5px; }
    .combo.view { width: 60px; height: 24px; margin-left: 1px; }
    .combo.view select { padding-left: 20px; }
    .view .ic { position: absolute; left: 2px; top: 4px; z-index: 1; }
    cad-view { flex: 1; min-height: 0; }
    .snap { height: 35px; padding-top: 1px; gap: 2px; }
    .row.snap .group { padding-right: 0; }
    .unit { color: #6d6d6d; padding: 0 2px; }
    .spin { display: flex; align-items: center; width: 58px; height: 23px; border: 1px solid #7a7a7a; padding-right: 3px; }
    .spin input { flex: 1; min-width: 0; width: 10px; text-align: right; color: #777; padding-right: 8px; }
    .spin.wide { width: 68px; margin: 0 2px 0 4px; }
    .chk { display: flex; align-items: center; gap: 8px; }
    .chk input { appearance: none; width: 11px; height: 11px; border: 1px solid #8a8a8a; background: #f6f6f6; }
    .editor { display: flex; flex: 0 0 198px; }
    .rail { width: 12px; background: radial-gradient(circle, #bdbdbd 1px, transparent 1px) 3px 14px / 4px 4px; }
    .rail button { width: 10px; height: 11px; background: #eee; border: 1px solid #666; display: grid; place-items: center; }
    .edit { flex: 1; min-width: 0; display: flex; flex-direction: column; }
    .edit .group { height: 25px; margin-right: 2px; flex: none; }
    .edit .step { width: 24px; justify-content: center; padding: 0; }
    .edit .arr { width: 22px; justify-content: center; padding: 0; }
    .total { padding-left: 2px; white-space: pre; }
    bar-table { flex: 1; min-height: 0; }
    .status { display: flex; gap: 3px; flex: none; height: 22px; padding-top: 1px; background: #fff; }
    .status span { border: 1px solid #d4d4d4; border-left-color: #e8e8e8; background: linear-gradient(#fff, #f0f0f0); padding: 1px; width: 147px; white-space: pre; }
    .status .c2 { width: 77px; } .status .c3 { width: 97px; } .status .c4 { width: 47px; } .status .c5 { flex: 1; font-feature-settings: normal; }
    .mark { position: absolute; left: 435px; top: 495px; pointer-events: none; }
    .ball { position: absolute; left: 943px; top: 0; }
    .ball text { font-size: 13px; font-weight: 700; }
    .ime { position: absolute; right: 0; bottom: 40px; display: flex; align-items: center; gap: 6px; width: 185px; height: 26px; padding-left: 33px; background: #fbfdff; border: 1px solid #a9cbe8; border-right: 0; color: #1c78cf; font-size: 15px; font-weight: 700; }
    .ime .s { position: absolute; left: -2px; bottom: -1px; }
  `];

  render() {
    return html`
      <header class="title">${icon("logo")}<h1>广联达BIM钢筋算量软件 GGJ2013 - [C:\\Users\\Administrator.PC-20141127NRHM\\Desktop\\白龙村-2016-08-25-13-27-07(2166版)_16G.GGJ12]</h1>
        <button aria-label="最小化"><svg width="10" height="10" viewBox="0 0 10 10"><path d="M0 5.500h10" stroke="#000"/></svg></button>
        <button aria-label="还原"><svg width="10" height="10" viewBox="0 0 10 10"><path d="M.5 2.500h7v7h-7zM2.500 2.500v-2h7v7h-2" stroke="#000" fill="none"/></svg></button>
        <button aria-label="关闭"><svg width="10" height="10" viewBox="0 0 10 10"><path d="M0 0l10 10M10 0L0 10" stroke="#000"/></svg></button></header>
      <div class="menu"><nav>${MENUS.map((m) => html`<button>${m}</button>`)}</nav>
        ${tool("newdoc", "新建变更", { split: true })}${tool("robot", "广小二")}
        <div class="group news"><a href="#">为什么筏板XY方向布置..</a></div>
        <div class="group account">${tool("user", "13907298339", { split: true })}${tool("", "造价豆:0")}${tool("bell", "~消息")}${chevrons}</div></div>
      <div class="spread">
        <div class="group lead">${tool("file", "~新建")}${tool("open", "~打开", { split: true })}${tool("save", "~保存")}${sep}${tool("undo", "~撤销", { split: true })}${chevrons}</div>
        <div class="group mid">${tool("define", "定义")}${tool("sigma", "汇总计算")}${tool("cloud", "云检查")}${tool("flat", "平齐板顶", { off: true })}${tool("find", "查找图元")}${tool("view", "查看钢筋量")}${tool("batch", "批量选择")}${chevrons}</div>
        <div class="group rest"><span class="combo view">${icon("rect2d")}<select aria-label="视图"><option>二维</option></select><i>${tri}</i></span>${tool("cube", "俯视", { split: true })}${tool("orbit", "动态观察")}${tool("local3d", "局部三维")}${sep}${tool("full", "全屏")}${tool("zoom", "缩放", { split: true })}${tool("pan", "平移", { split: true })}${tool("rotscreen", "屏幕旋转", { drop: true })}${sep}${tool("floors", "选择楼层")}${chevrons}</div>
      </div>
      <div class="body">
        <module-nav></module-nav>
        <main>
          <div class="row"><div class="group">${grip}${tool("brush", "删除")}${sep}${tool("copy", "复制")}${tool("mirror", "镜像")}${sep}${tool("move", "移动")}${tool("rotate", "旋转")}${sep}${tool("extend", "延伸", { off: true })}${tool("trim", "修剪", { off: true })}${sep}${tool("brk", "打断", { off: true })}${tool("join", "合并", { off: true })}${tool("split", "分割", { off: true })}${sep}${tool("align", "对齐", { off: true, drop: true })}${tool("offset", "偏移")}${tool("stretch", "拉伸")}${sep}${tool("grip", "设置夹点", { off: true })}</div></div>
          <div class="row"><div class="group">${grip}${combo("楼层", "首层", "first")}${combo("构件类型", "板")}${combo("子类型", "板洞")}${combo("构件", "BD-2")}${combo("分层", "分层板1")}${sep}${tool("prop", "属性")}${tool("editbar", "编辑钢筋", { on: true })}${tool("list", "构件列表")}${tool("picker", "拾取构件")}</div>
            <div class="group">${grip}${tool("ax2", "两点")}${tool("axpar", "平行")}${tool("axang", "点角", { split: true })}${tool("ax3", "三点辅轴", { split: true })}${tool("brush", "删除辅轴")}${tool("dim", "尺寸标注", { split: true })}</div></div>
          <div class="row last"><div class="group">${grip}${tool("cursor", "选择", { on: true, split: true })}${sep}${tool("point", "点")}${tool("rotpt", "旋转点")}${sep}${tool("line", "直线", { off: true })}${tool("arc", "三点画弧", { off: true, split: true })}${combo("参数", "", "box")}${tool("rect", "矩形", { off: true })}</div><div class="group stub">${grip}</div></div>
          <cad-view></cad-view>
          <div class="row snap"><div class="group">${grip}${tool("ortho", "正交")}${tool("snap", "对象捕捉", { on: true })}${tool("dyn", "动态输入")}</div>
            <div class="group">${grip}${tool("cross", "交点")}${tool("perp", "垂点", { on: true })}${tool("mid", "中点", { on: true })}${tool("vertex", "顶点")}${tool("coord", "坐标")}</div>
            <div class="group">${grip}${combo("偏移方式", "不偏移", "shift")}${sep}<span class="unit">X=</span>${spin("X", "0")}<span class="unit">mm</span><span class="unit">Y=</span>${spin("Y", "0")}<span class="unit">mm</span>${sep}<label class="chk"><input type="checkbox" />旋转</label>${spin("角度", "0.000", "wide")}<span class="unit">°</span></div></div>
          <div class="editor">
            <div class="rail"><button aria-label="关闭面板"><svg width="8" height="8" viewBox="0 0 8 8"><path d="M1 1l6 6M7 1L1 7" stroke="#222" stroke-width="1.500"/></svg></button></div>
            <div class="edit">
              <div class="group">${["first", "prev", "next", "last"].map((n) => html`<button class="tool step" aria-label=${n}>${icon(n)}</button>`)}${sep}${["up", "down"].map((n) => html`<button class="tool arr" aria-label=${n}>${icon(n)}</button>`)}${sep}${tool("insert", "插入", { off: true })}${tool("remove", "删除", { off: true })}${tool("scale", "缩尺配筋")}${tool("info", "钢筋信息")}${tool("lib", "钢筋图库")}${tool("other", "其他", { drop: true })}${tool("", "关闭")}${sep}<span class="total">单构件钢筋总重(kg) : 21.911</span></div>
              <bar-table></bar-table>
            </div>
          </div>
        </main>
      </div>
      <footer class="status song"><span>X=8181 Y=13844</span><span class="c2">层高:4.5m</span><span class="c3">底标高:-0.03m</span><span class="c4">1(1)</span><span class="c5">按鼠标左键指定第一个角点，或拾取构件图元</span></footer>
      <task-bar></task-bar>
      <svg class="mark" width="282" height="195" viewBox="0 0 282 195" aria-hidden="true"><ellipse cx="140.500" cy="97.500" rx="137.500" ry="94.500" fill="none" stroke="#00f" stroke-width="3"/></svg>
      <svg class="ball" width="60" height="30" viewBox="0 0 60 30" aria-hidden="true"><circle cx="30" cy="-3" r="28" fill="#000" opacity=".08"/><circle cx="30" cy="-6" r="24.500" fill="#48cf58" stroke="#c6c6c6" stroke-width="2"/><circle cx="30" cy="-6" r="23" fill="none" stroke="#1e9a4a"/><text x="30" y="12" fill="#fff" text-anchor="middle">68</text></svg>
      <div class="ime"><svg class="s" width="29" height="28" viewBox="0 0 29 28"><path d="M2 6L23 1c3 0 4 2 4 4l1 16c0 3-1 4-4 4l-18 3c-3 0-4-1-4-4L0 10c0-2 0-3 2-4z" fill="#f04e16"/><path d="M21 7c-5-3-14-2-13 3 1 4 12 2 12 7 0 4-8 5-13 2" stroke="#fff" stroke-width="4" fill="none"/></svg><span>中</span>
        <svg width="14" height="16" viewBox="0 0 14 16"><circle cx="4" cy="5" r="2" fill="none" stroke="#1c78cf" stroke-width="1.500"/><path d="M9 9h3v3l-2 3" stroke="#1c78cf" stroke-width="2" fill="none"/></svg>
        <svg width="14" height="16" viewBox="0 0 14 16"><rect x="4.500" y="0" width="5" height="10" rx="2.500" fill="#1c78cf"/><path d="M2 7c0 7 10 7 10 0M7 12v4M4 15.500h6" stroke="#1c78cf" fill="none" stroke-width="1.500"/></svg>
        <svg width="16" height="16" viewBox="0 0 16 16"><rect x="0" y="2" width="16" height="12" fill="#1c78cf"/><path d="M2 5.500h12M2 8.500h12M4 11.500h8" stroke="#fff" stroke-dasharray="2 1"/></svg>
        <svg width="16" height="16" viewBox="0 0 16 16"><circle cx="6" cy="4" r="3" fill="#a9b8cc"/><path d="M0 14c0-8 10-8 11-4v4z" fill="#a9b8cc"/><rect x="8" y="9" width="8" height="7" fill="#8fa2bc"/></svg>
        <svg width="15" height="16" viewBox="0 0 15 16"><path d="M4 1c2 2 5 2 7 0l4 3-2 4-2-1v8H4V7L2 8 0 4z" fill="#1c78cf"/></svg>
        <svg width="15" height="16" viewBox="0 0 15 16"><path d="M2 14l7-7" stroke="#1c78cf" stroke-width="3.500"/><path d="M14 3l-3 3-2-2 3-3c-4-1-7 2-6 6l3 2c4 0 6-3 5-6z" fill="#1c78cf"/></svg></div>`;
  }
}
